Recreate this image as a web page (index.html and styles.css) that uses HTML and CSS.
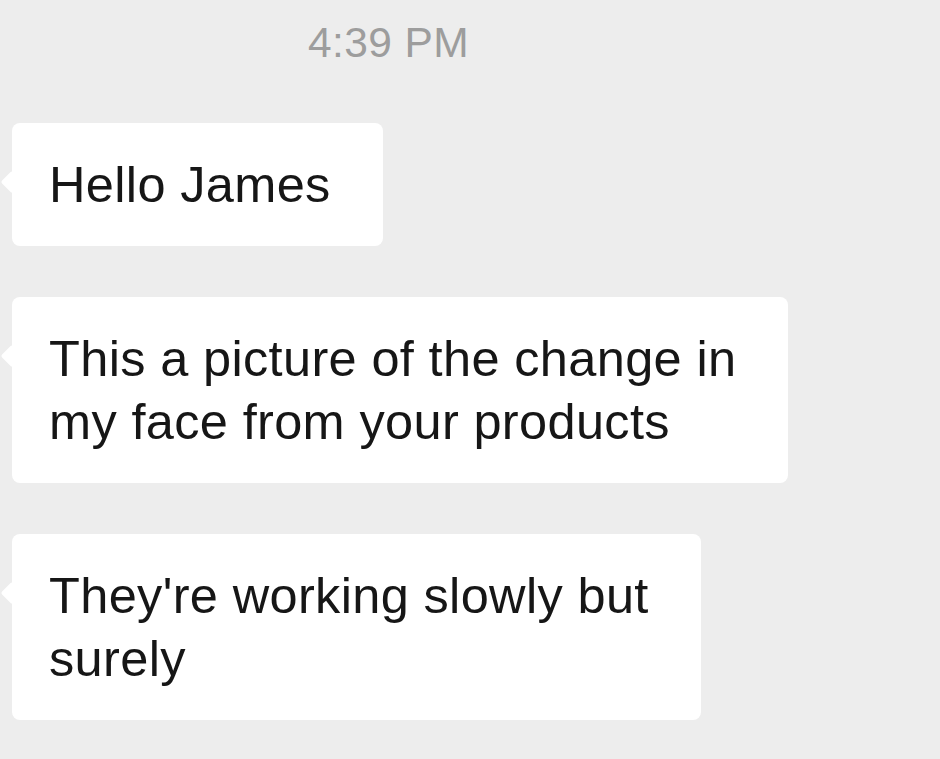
FILE: index.html
```html
<!DOCTYPE html>
<html lang="en">
<head>
<meta charset="utf-8">
<title>Chat</title>
<link rel="stylesheet" href="styles.css">
</head>
<body>
<div class="chat">
  <div class="time">4:39 PM</div>
  <div class="msg">Hello James</div>
  <div class="msg">This a picture of the change in<br>my face from your products</div>
  <div class="msg">They're working slowly but<br>surely</div>
</div>
</body>
</html>
```
FILE: styles.css
```css
html, body {
  margin: 0;
  padding: 0;
  background: #ededed;
}
body {
  font-family: "Liberation Sans", Arial, sans-serif;
  width: 940px;
  height: 759px;
  overflow: hidden;
}
.chat {
  display: flex;
  flex-direction: column;
  align-items: flex-start;
  gap: 51px;
  padding: 18px 0 0 12px;
}
.time {
  font-size: 42.5px;
  line-height: 50px;
  letter-spacing: 0.4px;
  color: #9d9d9d;
  margin-left: 296px;
  margin-bottom: 4px;
}
.msg {
  position: relative;
  background: #ffffff;
  border-radius: 8px;
  padding: 30px 52px 30px 37px;
  font-size: 50.5px;
  line-height: 63px;
  letter-spacing: 0.35px;
  color: #161616;
  white-space: nowrap;
}
.msg::before {
  content: "";
  position: absolute;
  left: -8px;
  top: 51px;
  width: 16px;
  height: 16px;
  background: #ffffff;
  border-radius: 2px;
  transform: rotate(45deg);
}
```
